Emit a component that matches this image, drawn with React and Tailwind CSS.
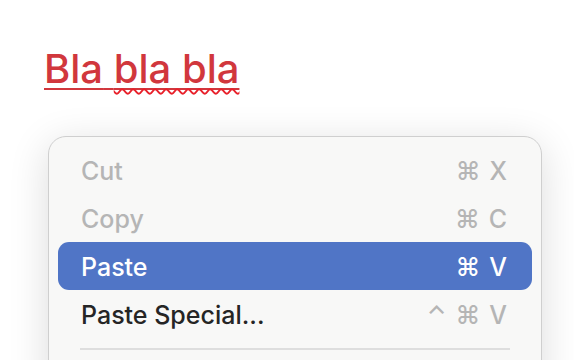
import React from "react";

const items = [
  { label: "Cut", keys: ["⌘", "X"], disabled: true },
  { label: "Copy", keys: ["⌘", "C"], disabled: true },
  { label: "Paste", keys: ["⌘", "V"], active: true },
  { label: "Paste Special...", keys: ["⌃", "⌘", "V"] },
];

export default function App() {
  return (
    <div
      className="w-[574px] h-[360px] overflow-hidden bg-white"
      style={{ fontFamily: "Inter, 'DejaVu Sans', sans-serif" }}
    >
      <div className="pt-[49px] pl-[44px] h-[136px]">
        <span className="text-[40px] font-[450] leading-[40px] text-[#d1373d] underline decoration-[#d1373d] decoration-2 underline-offset-[5px]">
          Bla{" "}
          <span className="underline decoration-wavy decoration-[#e8202a] decoration-2 underline-offset-[5px]">
            bla bla
          </span>
        </span>
      </div>
      <div className="ml-[48px] w-[494px] h-[260px] rounded-[18px] border border-[#cfcfcf] bg-[#f8f8f7] pt-[9px] px-[9px] shadow-[0_8px_40px_rgba(0,0,0,0.14)]">
        {items.map((it) => (
          <div
            key={it.label}
            className={
              "h-[48px] flex items-center justify-between pt-[4px] pl-[23px] pr-[25px] rounded-[11px] text-[25px] font-[450] " +
              (it.active
                ? "bg-[#5075c6] text-white"
                : it.disabled
                ? "text-[#b5b5b5]"
                : "text-[#252525]")
            }
          >
            <span>{it.label}</span>
            <span
              className={
                "flex items-center gap-[9px] " +
                (it.active ? "text-white" : "text-[#b5b5b5]")
              }
            >
              {it.keys.map((k, i) => (
                <span key={i}>{k}</span>
              ))}
            </span>
          </div>
        ))}
        <div className="mx-[22px] mt-[10px] h-[2px] bg-[#dedede]" />
      </div>
    </div>
  );
}
